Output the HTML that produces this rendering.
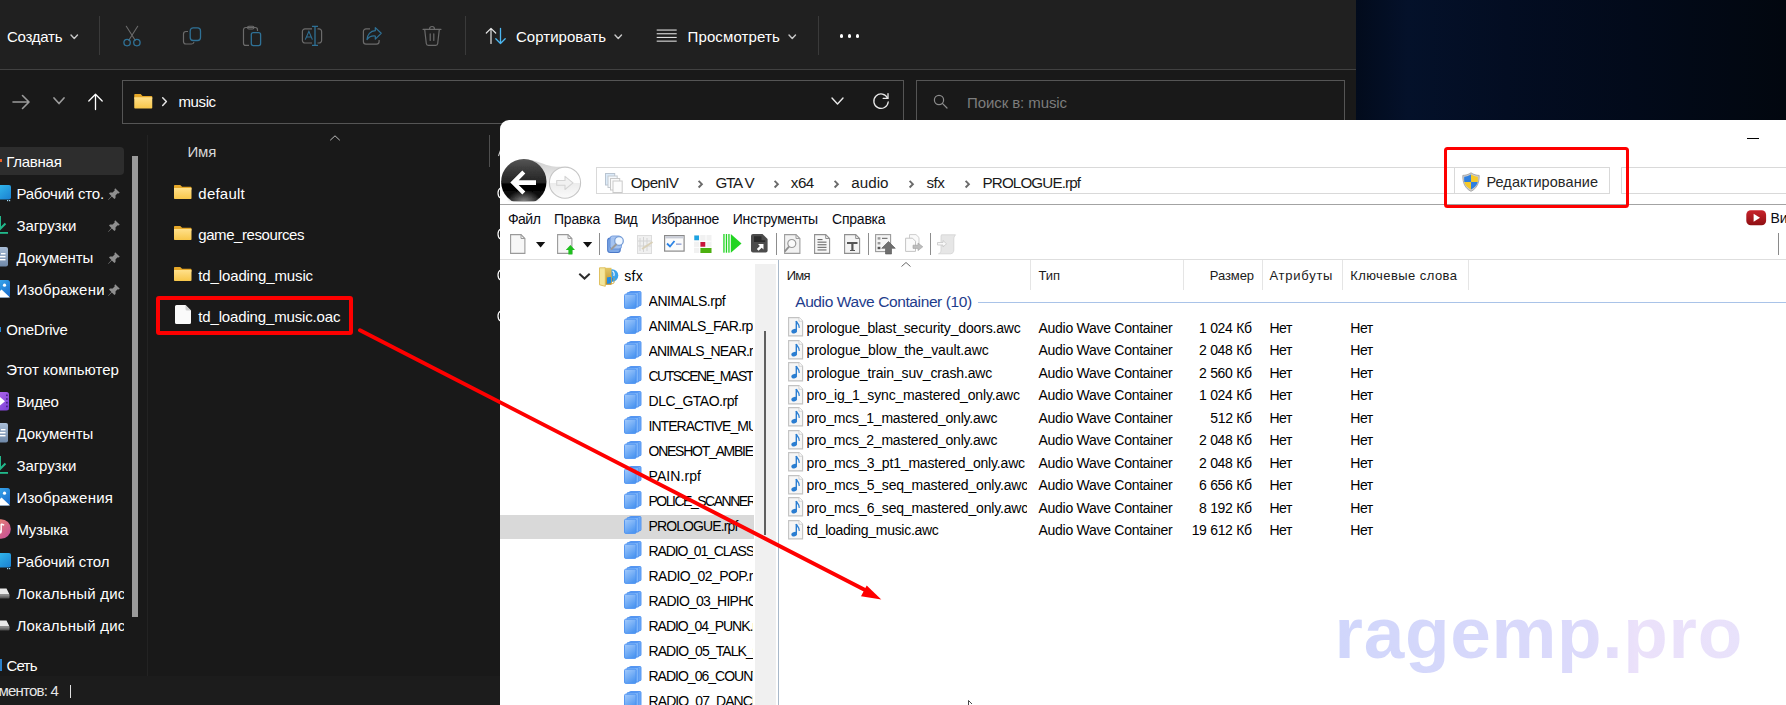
<!DOCTYPE html>
<html><head><meta charset="utf-8">
<style>
html,body{margin:0;padding:0;}
body{width:1786px;height:705px;overflow:hidden;position:relative;background:#030a1a;font-family:"Liberation Sans",sans-serif;}
.a{position:absolute;}
.t{position:absolute;white-space:nowrap;line-height:1;}
svg{overflow:visible;}
#desk{left:1356px;top:0;width:430px;height:120px;background:linear-gradient(90deg,#020b1c 0%,#04112a 12%,#030d22 35%,#020a1a 65%,#02070f 100%);}
#ex{left:0;top:0;width:1356px;height:705px;background:#191919;overflow:hidden;}
#extb{left:0;top:0;width:1356px;height:69px;background:#202020;border-bottom:1px solid #414141;}
#iv{left:500px;top:120px;width:1286px;height:585px;background:#fff;border-top-left-radius:9px;overflow:hidden;}
</style></head><body>

<div id="desk" class="a"></div>
<div id="ex" class="a">
<div id="extb" class="a"></div>
<!-- toolbar -->
<div class="t" style="left:7.00px;top:28.60px;font-size:15px;color:#fff;letter-spacing:-0.244px;">Создать</div>
<svg class="a" style="left:70px;top:33.5px;" width="8.5" height="5.5" viewBox="0 0 8.5 5.5"><path d="M1 1 L4.25 4.5 L7.5 1" fill="none" stroke="#c8c8c8" stroke-width="1.4" stroke-linecap="round" stroke-linejoin="round"/></svg>
<div class="a" style="left:99px;top:16px;width:1px;height:39px;background:#3a3a3a"></div>
<svg class="a" style="left:120px;top:24px;" width="24" height="24" viewBox="0 0 24 24"><path d="M6.3 2.3 L15.2 16.3 M17.7 2.3 L8.8 16.3" stroke="#6b6b6b" stroke-width="1.1" fill="none" stroke-linecap="round"/><circle cx="7.1" cy="18.6" r="3.2" fill="none" stroke="#2f7196" stroke-width="1.3"/><circle cx="16.9" cy="18.6" r="3.2" fill="none" stroke="#2f7196" stroke-width="1.3"/></svg>
<svg class="a" style="left:180px;top:24px;" width="24" height="24" viewBox="0 0 24 24"><path d="M8 7.5 H6 A2.5 2.5 0 0 0 3.5 10 V17.5 A2.5 2.5 0 0 0 6 20 H11.5 A2.5 2.5 0 0 0 14 18" fill="none" stroke="#6b6b6b" stroke-width="1.2"/><rect x="10.2" y="3.9" width="10.3" height="12.6" rx="3" fill="none" stroke="#2f7196" stroke-width="1.3"/></svg>
<svg class="a" style="left:240px;top:24px;" width="24" height="24" viewBox="0 0 24 24"><path d="M9 21.4 H5.7 A2.2 2.2 0 0 1 3.5 19.2 V5.7 A2.2 2.2 0 0 1 5.7 3.5 H15.3 A2.2 2.2 0 0 1 17.5 5.7 V7" fill="none" stroke="#6b6b6b" stroke-width="1.2"/><rect x="7.5" y="2.2" width="6.5" height="2.8" rx="1.4" fill="none" stroke="#6b6b6b" stroke-width="1.1"/><rect x="11.3" y="8.6" width="9.3" height="13" rx="2" fill="none" stroke="#2f7196" stroke-width="1.3"/></svg>
<svg class="a" style="left:299px;top:24px;" width="26" height="24" viewBox="0 0 26 24"><path d="M13 4.9 H6 A2.6 2.6 0 0 0 3.4 7.5 V16.4 A2.6 2.6 0 0 0 6 19 H13 M18.5 4.9 H20 A2.6 2.6 0 0 1 22.6 7.5 V16.4 A2.6 2.6 0 0 1 20 19 H18.5" fill="none" stroke="#6b6b6b" stroke-width="1.2"/><path d="M16 2.3 V21.4 M13 2.3 H19 M13 21.4 H19" stroke="#2f7196" stroke-width="1.3" fill="none"/><path d="M6.3 15.6 L9.9 7.3 L13.4 15.6 M7.5 13 H12.3" stroke="#2f7196" stroke-width="1.1" fill="none"/></svg>
<svg class="a" style="left:360px;top:24px;" width="24" height="24" viewBox="0 0 24 24"><path d="M10 4.8 H6 A2.6 2.6 0 0 0 3.4 7.4 V17.5 A2.6 2.6 0 0 0 6 20.1 H16.5 A2.6 2.6 0 0 0 19.1 17.5 V16" fill="none" stroke="#6b6b6b" stroke-width="1.2"/><path d="M15.3 3.6 L21.2 9.3 L15.3 15.2 V12 C11.5 11.6 8.8 13 7 15.6 C7.2 10.6 10.5 7 15.3 6.7 Z" fill="none" stroke="#2f7196" stroke-width="1.2" stroke-linejoin="round"/></svg>
<svg class="a" style="left:420px;top:24px;" width="24" height="24" viewBox="0 0 24 24"><path d="M3 5.3 H21 M9.5 5 A2.5 2.5 0 0 1 14.5 5 M4.7 5.5 L6.3 19.5 A2 2 0 0 0 8.3 21.3 H15.7 A2 2 0 0 0 17.7 19.5 L19.3 5.5 M10.2 9.8 V16.5 M13.8 9.8 V16.5" fill="none" stroke="#6b6b6b" stroke-width="1.2" stroke-linecap="round"/></svg>
<div class="a" style="left:465px;top:16px;width:1px;height:39px;background:#3a3a3a"></div>
<svg class="a" style="left:484px;top:26px;" width="26" height="20" viewBox="0 0 26 20"><path d="M7 17.5 V2.3 M2.3 7 L7 2.3 L11.7 7" fill="none" stroke="#e4e4e4" stroke-width="1.2" stroke-linecap="round" stroke-linejoin="round"/><path d="M16.5 2.3 V17.5 M11.8 12.8 L16.5 17.5 L21.2 12.8" fill="none" stroke="#4cb6f0" stroke-width="1.3" stroke-linecap="round" stroke-linejoin="round"/></svg>
<div class="t" style="left:516.00px;top:28.60px;font-size:15px;color:#fff;letter-spacing:0.035px;">Сортировать</div>
<svg class="a" style="left:614px;top:33.5px;" width="8.5" height="5.5" viewBox="0 0 8.5 5.5"><path d="M1 1 L4.25 4.5 L7.5 1" fill="none" stroke="#c8c8c8" stroke-width="1.4" stroke-linecap="round" stroke-linejoin="round"/></svg>
<svg class="a" style="left:656px;top:28px;" width="22" height="16" viewBox="0 0 22 16"><rect x="0.7" y="1.5" width="20" height="1.1" fill="#dcdcdc"/><rect x="0.7" y="5.2" width="20" height="1.1" fill="#dcdcdc"/><rect x="0.7" y="8.9" width="20" height="1.1" fill="#dcdcdc"/><rect x="0.7" y="12.6" width="20" height="1.1" fill="#dcdcdc"/></svg>
<div class="t" style="left:687.50px;top:28.60px;font-size:15px;color:#fff;letter-spacing:0.133px;">Просмотреть</div>
<svg class="a" style="left:788px;top:33.5px;" width="8.5" height="5.5" viewBox="0 0 8.5 5.5"><path d="M1 1 L4.25 4.5 L7.5 1" fill="none" stroke="#c8c8c8" stroke-width="1.4" stroke-linecap="round" stroke-linejoin="round"/></svg>
<div class="a" style="left:818px;top:16px;width:1px;height:39px;background:#3a3a3a"></div>
<div class="a" style="left:839.9px;top:34.4px;width:3.2px;height:3.2px;background:#fff;border-radius:50%"></div>
<div class="a" style="left:847.9px;top:34.4px;width:3.2px;height:3.2px;background:#fff;border-radius:50%"></div>
<div class="a" style="left:855.9px;top:34.4px;width:3.2px;height:3.2px;background:#fff;border-radius:50%"></div>
<!-- navbar -->
<svg class="a" style="left:10px;top:90px;" width="24" height="24" viewBox="0 0 24 24"><path d="M3 12 H18.5 M12.5 5.5 L19 12 L12.5 18.5" fill="none" stroke="#9b9b9b" stroke-width="1.6" stroke-linecap="round" stroke-linejoin="round"/></svg>
<svg class="a" style="left:53px;top:97px;" width="12" height="7.5" viewBox="0 0 12 7.5"><path d="M1 1 L6 6.5 L11 1" fill="none" stroke="#9b9b9b" stroke-width="1.7" stroke-linecap="round" stroke-linejoin="round"/></svg>
<svg class="a" style="left:84px;top:90px;" width="24" height="24" viewBox="0 0 24 24"><path d="M11.5 19.5 V4.5 M4.8 11 L11.5 4.3 L18.2 11" fill="none" stroke="#fff" stroke-width="1.3" stroke-linecap="round" stroke-linejoin="round"/></svg>
<div class="a" style="left:122px;top:80px;width:780px;height:42px;border:1px solid #555;background:#191919"></div>
<svg class="a" style="left:134px;top:93.5px;" width="18.5" height="14.5" viewBox="0 0 18 14.5"><defs><linearGradient id="fg1433" x1="0" y1="0" x2="0" y2="1"><stop offset="0" stop-color="#ffe08a"/><stop offset="1" stop-color="#f7c649"/></linearGradient></defs><path d="M0.8 0 H6.4 L8.3 1.9 H17.2 A0.8 0.8 0 0 1 18 2.7 V5 H0 V0.8 A0.8 0.8 0 0 1 0.8 0 Z" fill="#e5a728"/><path d="M0 3.2 H18 V13.7 A0.8 0.8 0 0 1 17.2 14.5 H0.8 A0.8 0.8 0 0 1 0 13.7 Z" fill="url(#fg1433)"/></svg>
<svg class="a" style="left:160px;top:95px;" width="10" height="14" viewBox="0 0 10 14"><path d="M2.7 2.8 L6.4 6.6 L2.7 10.4" fill="none" stroke="#e6e6e6" stroke-width="1.5" stroke-linecap="round" stroke-linejoin="round"/></svg>
<div class="t" style="left:178.50px;top:93.80px;font-size:15px;color:#fff;letter-spacing:-0.394px;">music</div>
<svg class="a" style="left:831px;top:97px;" width="13" height="8" viewBox="0 0 13 8"><path d="M1 1 L6.5 7 L12 1" fill="none" stroke="#e8e8e8" stroke-width="1.4" stroke-linecap="round" stroke-linejoin="round"/></svg>
<svg class="a" style="left:871px;top:91px;" width="20" height="20" viewBox="0 0 20 20"><path d="M16.6 7.2 A7.2 7.2 0 1 0 17.2 11" fill="none" stroke="#e8e8e8" stroke-width="1.3" stroke-linecap="round"/><path d="M17 2.6 V7.4 H12.2" fill="none" stroke="#e8e8e8" stroke-width="1.3" stroke-linecap="round" stroke-linejoin="round"/></svg>
<div class="a" style="left:916px;top:80px;width:427px;height:42px;border:1px solid #555;background:#191919"></div>
<svg class="a" style="left:932px;top:93px;" width="18" height="18" viewBox="0 0 18 18"><circle cx="7" cy="7" r="4.6" fill="none" stroke="#8c8c8c" stroke-width="1.2"/><path d="M10.4 10.4 L15 15" stroke="#8c8c8c" stroke-width="1.2" stroke-linecap="round"/></svg>
<div class="t" style="left:967.00px;top:94.80px;font-size:15px;color:#7d7d7d;letter-spacing:-0.086px;">Поиск в: music</div>
<!-- sidebar -->
<div class="a" style="left:0px;top:147px;width:124px;height:27.5px;background:#2d2d2d;border-radius:0 4px 4px 0"></div>
<div class="a" style="left:0px;top:159px;width:1.5px;height:3px;background:#e8632a"></div>
<div class="a" style="left:132px;top:156px;width:6px;height:461px;background:#9a9a9a"></div>
<div class="a" style="left:146.5px;top:135px;width:1.5px;height:542px;background:#232323"></div>
<div class="t" style="left:6.30px;top:153.80px;font-size:15px;color:#fff;letter-spacing:-0.270px;">Главная</div>
<svg class="a" style="left:-7px;top:185px;" width="18" height="17" viewBox="0 0 18 17"><defs><linearGradient id="gd193" x1="0" y1="0" x2="1" y2="1"><stop offset="0" stop-color="#35c1f1"/><stop offset="1" stop-color="#1a7fd0"/></linearGradient></defs><rect x="0" y="0" width="18" height="14.5" rx="2" fill="url(#gd193)"/><rect x="14" y="15" width="1.2" height="1.2" fill="#9fd8f5"/><rect x="16" y="15" width="1.2" height="1.2" fill="#9fd8f5"/></svg>
<div class="a" style="left:16.4px;top:183.903px;width:88px;height:21px;overflow:hidden"><div class="t" style="left:0;top:2px;font-size:15px;color:#fff;letter-spacing:-0.196px">Рабочий сто...</div></div>
<svg class="a" style="left:107px;top:186.5px;" width="14" height="14" viewBox="0 0 14 14"><path d="M8.2 1.2 L12.8 5.8 L11.6 6.6 L10.7 6.2 L8.6 8.3 L8.5 11 L7.4 12 L4.8 9.4 L1.3 12.9 L1.1 12.7 L4.4 9 L2 6.6 L3 5.5 L5.7 5.4 L7.8 3.3 L7.4 2.4 Z" fill="#8f8f8f"/></svg>
<svg class="a" style="left:-8px;top:215px;" width="18" height="20" viewBox="0 0 18 20"><path d="M8 1 V13.5 M2.5 8.5 L8 14 L13.5 8.5" fill="none" stroke="#21b88b" stroke-width="2" stroke-linecap="butt" stroke-linejoin="miter"/><rect x="0" y="17" width="16" height="1.8" fill="#21b88b"/></svg>
<div class="t" style="left:16.40px;top:217.90px;font-size:15px;color:#fff;letter-spacing:-0.071px;">Загрузки</div>
<svg class="a" style="left:107px;top:218.5px;" width="14" height="14" viewBox="0 0 14 14"><path d="M8.2 1.2 L12.8 5.8 L11.6 6.6 L10.7 6.2 L8.6 8.3 L8.5 11 L7.4 12 L4.8 9.4 L1.3 12.9 L1.1 12.7 L4.4 9 L2 6.6 L3 5.5 L5.7 5.4 L7.8 3.3 L7.4 2.4 Z" fill="#8f8f8f"/></svg>
<svg class="a" style="left:-8px;top:247px;" width="17" height="20" viewBox="0 0 17 20"><defs><linearGradient id="gdoc257" x1="0" y1="0" x2="0" y2="1"><stop offset="0" stop-color="#a9bdd6"/><stop offset="1" stop-color="#6f88a8"/></linearGradient></defs><rect x="0" y="0" width="16" height="19.5" rx="2" fill="url(#gdoc257)"/><rect x="3" y="6" width="5" height="1.4" fill="#fff"/><rect x="9" y="6" width="4.5" height="1.4" fill="#fff"/><rect x="3" y="9" width="10.5" height="1.4" fill="#fff"/><rect x="3" y="12" width="10.5" height="1.4" fill="#fff"/></svg>
<div class="t" style="left:16.40px;top:249.90px;font-size:15px;color:#fff;letter-spacing:-0.047px;">Документы</div>
<svg class="a" style="left:107px;top:250.5px;" width="14" height="14" viewBox="0 0 14 14"><path d="M8.2 1.2 L12.8 5.8 L11.6 6.6 L10.7 6.2 L8.6 8.3 L8.5 11 L7.4 12 L4.8 9.4 L1.3 12.9 L1.1 12.7 L4.4 9 L2 6.6 L3 5.5 L5.7 5.4 L7.8 3.3 L7.4 2.4 Z" fill="#8f8f8f"/></svg>
<svg class="a" style="left:-8px;top:280px;" width="18" height="18" viewBox="0 0 18 18"><defs><linearGradient id="gim289" x1="0" y1="0" x2="1" y2="1"><stop offset="0" stop-color="#3fb4f3"/><stop offset="1" stop-color="#1767c9"/></linearGradient></defs><rect x="0" y="0" width="18" height="17.5" rx="2.5" fill="url(#gim289)"/><path d="M2 17.5 L9.5 9.5 L18 17.5 Z" fill="#fff"/><circle cx="12.5" cy="5.2" r="1.6" fill="#fff"/></svg>
<div class="a" style="left:16.4px;top:279.903px;width:88px;height:21px;overflow:hidden"><div class="t" style="left:0;top:2px;font-size:15px;color:#fff;letter-spacing:0.221px">Изображения</div></div>
<svg class="a" style="left:107px;top:282.5px;" width="14" height="14" viewBox="0 0 14 14"><path d="M8.2 1.2 L12.8 5.8 L11.6 6.6 L10.7 6.2 L8.6 8.3 L8.5 11 L7.4 12 L4.8 9.4 L1.3 12.9 L1.1 12.7 L4.4 9 L2 6.6 L3 5.5 L5.7 5.4 L7.8 3.3 L7.4 2.4 Z" fill="#8f8f8f"/></svg>
<div class="a" style="left:0px;top:327px;width:1.2px;height:5px;background:#2a8ad4"></div>
<div class="t" style="left:6.30px;top:321.80px;font-size:15px;color:#fff;letter-spacing:-0.269px;">OneDrive</div>
<div class="t" style="left:6.30px;top:361.90px;font-size:15px;color:#fff;letter-spacing:0.038px;">Этот компьютер</div>
<svg class="a" style="left:-8px;top:392px;" width="17" height="19" viewBox="0 0 17 19"><defs><linearGradient id="gv401" x1="0" y1="0" x2="1" y2="1"><stop offset="0" stop-color="#b86cf0"/><stop offset="1" stop-color="#7a3fd6"/></linearGradient></defs><rect x="0" y="0" width="17" height="18.5" rx="2.5" fill="url(#gv401)"/><path d="M8 5 L13 9.2 L8 13.5 Z" fill="#fff"/><rect x="14.2" y="2.5" width="1.4" height="1.6" fill="#3a1a78"/><rect x="14.2" y="6.2" width="1.4" height="1.6" fill="#3a1a78"/><rect x="14.2" y="9.9" width="1.4" height="1.6" fill="#3a1a78"/><rect x="14.2" y="13.6" width="1.4" height="1.6" fill="#3a1a78"/></svg>
<div class="t" style="left:16.40px;top:393.80px;font-size:15px;color:#fff;letter-spacing:-0.324px;">Видео</div>
<svg class="a" style="left:-8px;top:423px;" width="17" height="20" viewBox="0 0 17 20"><defs><linearGradient id="gdoc433" x1="0" y1="0" x2="0" y2="1"><stop offset="0" stop-color="#a9bdd6"/><stop offset="1" stop-color="#6f88a8"/></linearGradient></defs><rect x="0" y="0" width="16" height="19.5" rx="2" fill="url(#gdoc433)"/><rect x="3" y="6" width="5" height="1.4" fill="#fff"/><rect x="9" y="6" width="4.5" height="1.4" fill="#fff"/><rect x="3" y="9" width="10.5" height="1.4" fill="#fff"/><rect x="3" y="12" width="10.5" height="1.4" fill="#fff"/></svg>
<div class="t" style="left:16.40px;top:425.80px;font-size:15px;color:#fff;letter-spacing:-0.047px;">Документы</div>
<svg class="a" style="left:-8px;top:455px;" width="18" height="20" viewBox="0 0 18 20"><path d="M8 1 V13.5 M2.5 8.5 L8 14 L13.5 8.5" fill="none" stroke="#21b88b" stroke-width="2" stroke-linecap="butt" stroke-linejoin="miter"/><rect x="0" y="17" width="16" height="1.8" fill="#21b88b"/></svg>
<div class="t" style="left:16.40px;top:457.80px;font-size:15px;color:#fff;letter-spacing:-0.071px;">Загрузки</div>
<svg class="a" style="left:-8px;top:488px;" width="18" height="18" viewBox="0 0 18 18"><defs><linearGradient id="gim497" x1="0" y1="0" x2="1" y2="1"><stop offset="0" stop-color="#3fb4f3"/><stop offset="1" stop-color="#1767c9"/></linearGradient></defs><rect x="0" y="0" width="18" height="17.5" rx="2.5" fill="url(#gim497)"/><path d="M2 17.5 L9.5 9.5 L18 17.5 Z" fill="#fff"/><circle cx="12.5" cy="5.2" r="1.6" fill="#fff"/></svg>
<div class="t" style="left:16.40px;top:490.10px;font-size:15px;color:#fff;letter-spacing:0.221px;">Изображения</div>
<svg class="a" style="left:-9px;top:519px;" width="20" height="20" viewBox="0 0 20 20"><defs><linearGradient id="gm529" x1="0" y1="0" x2="1" y2="1"><stop offset="0" stop-color="#f08a6a"/><stop offset="1" stop-color="#c24d9c"/></linearGradient></defs><circle cx="10" cy="10" r="9.8" fill="url(#gm529)"/><path d="M10.2 5 V12.8 M10.2 5 L13.2 6.2" stroke="#fff" stroke-width="1.4" fill="none"/><circle cx="9" cy="13" r="1.8" fill="#fff"/></svg>
<div class="t" style="left:16.40px;top:522.10px;font-size:15px;color:#fff;letter-spacing:-0.243px;">Музыка</div>
<svg class="a" style="left:-7px;top:553px;" width="18" height="17" viewBox="0 0 18 17"><defs><linearGradient id="gd561" x1="0" y1="0" x2="1" y2="1"><stop offset="0" stop-color="#35c1f1"/><stop offset="1" stop-color="#1a7fd0"/></linearGradient></defs><rect x="0" y="0" width="18" height="14.5" rx="2" fill="url(#gd561)"/><rect x="14" y="15" width="1.2" height="1.2" fill="#9fd8f5"/><rect x="16" y="15" width="1.2" height="1.2" fill="#9fd8f5"/></svg>
<div class="t" style="left:16.40px;top:554.10px;font-size:15px;color:#fff;letter-spacing:-0.097px;">Рабочий стол</div>
<svg class="a" style="left:-8px;top:588px;" width="18" height="12" viewBox="0 0 18 12"><defs><linearGradient id="dk594" x1="0" y1="0" x2="0" y2="1"><stop offset="0" stop-color="#9a9a9a"/><stop offset="1" stop-color="#4a4a4a"/></linearGradient></defs><path d="M3 0.5 H14.5 L17.5 6.5 H0 Z" fill="#e9e9e9"/><rect x="0" y="6.5" width="17.5" height="4" rx="0.8" fill="url(#dk594)"/></svg>
<div class="a" style="left:16.4px;top:584.003px;width:107.3px;height:21px;overflow:hidden"><div class="t" style="left:0;top:2px;font-size:15px;color:#fff;letter-spacing:0.229px">Локальный диск</div></div>
<svg class="a" style="left:-8px;top:620px;" width="18" height="12" viewBox="0 0 18 12"><defs><linearGradient id="dk626" x1="0" y1="0" x2="0" y2="1"><stop offset="0" stop-color="#9a9a9a"/><stop offset="1" stop-color="#4a4a4a"/></linearGradient></defs><path d="M3 0.5 H14.5 L17.5 6.5 H0 Z" fill="#e9e9e9"/><rect x="0" y="6.5" width="17.5" height="4" rx="0.8" fill="url(#dk626)"/></svg>
<div class="a" style="left:16.4px;top:616.003px;width:107.3px;height:21px;overflow:hidden"><div class="t" style="left:0;top:2px;font-size:15px;color:#fff;letter-spacing:0.229px">Локальный диск</div></div>
<div class="a" style="left:0px;top:659px;width:1.5px;height:12px;background:#2a7fc9"></div>
<div class="t" style="left:6.40px;top:657.80px;font-size:15px;color:#fff;letter-spacing:-0.766px;">Сеть</div>
<div class="a" style="left:0px;top:676px;width:500px;height:29px;background:#1c1c1c"></div>
<div class="t" style="left:-1.50px;top:682.80px;font-size:15px;color:#e6e6e6;letter-spacing:-0.792px;">ментов: 4</div>
<div class="a" style="left:70px;top:685px;width:1px;height:12.5px;background:#e0e0e0"></div>
<!-- filelist -->
<div class="t" style="left:187.40px;top:143.80px;font-size:15px;color:#d6d6d6;letter-spacing:-0.072px;">Имя</div>
<svg class="a" style="left:329px;top:134px;" width="12" height="8" viewBox="0 0 12 8"><path d="M1.5 6 L6 1.8 L10.5 6" fill="none" stroke="#bdbdbd" stroke-width="1" stroke-linecap="round" stroke-linejoin="round"/></svg>
<div class="a" style="left:489px;top:134.5px;width:1px;height:32.5px;background:#4f4f4f"></div>
<svg class="a" style="left:497.5px;top:145px;" width="3" height="12" viewBox="0 0 3 12"><path d="M0.5 11 L3 4" stroke="#cfcfcf" stroke-width="1.1"/></svg>
<svg class="a" style="left:174px;top:185.2px;" width="17.5" height="14.1" viewBox="0 0 18 14.5"><defs><linearGradient id="fg1925" x1="0" y1="0" x2="0" y2="1"><stop offset="0" stop-color="#ffe08a"/><stop offset="1" stop-color="#f7c649"/></linearGradient></defs><path d="M0.8 0 H6.4 L8.3 1.9 H17.2 A0.8 0.8 0 0 1 18 2.7 V5 H0 V0.8 A0.8 0.8 0 0 1 0.8 0 Z" fill="#e5a728"/><path d="M0 3.2 H18 V13.7 A0.8 0.8 0 0 1 17.2 14.5 H0.8 A0.8 0.8 0 0 1 0 13.7 Z" fill="url(#fg1925)"/></svg>
<div class="t" style="left:198.30px;top:185.90px;font-size:15px;color:#fff;letter-spacing:0.238px;">default</div>
<svg class="a" style="left:174px;top:226.2px;" width="17.5" height="14.1" viewBox="0 0 18 14.5"><defs><linearGradient id="fg1966" x1="0" y1="0" x2="0" y2="1"><stop offset="0" stop-color="#ffe08a"/><stop offset="1" stop-color="#f7c649"/></linearGradient></defs><path d="M0.8 0 H6.4 L8.3 1.9 H17.2 A0.8 0.8 0 0 1 18 2.7 V5 H0 V0.8 A0.8 0.8 0 0 1 0.8 0 Z" fill="#e5a728"/><path d="M0 3.2 H18 V13.7 A0.8 0.8 0 0 1 17.2 14.5 H0.8 A0.8 0.8 0 0 1 0 13.7 Z" fill="url(#fg1966)"/></svg>
<div class="t" style="left:198.30px;top:226.90px;font-size:15px;color:#fff;letter-spacing:-0.430px;">game_resources</div>
<svg class="a" style="left:174px;top:267.2px;" width="17.5" height="14.1" viewBox="0 0 18 14.5"><defs><linearGradient id="fg2007" x1="0" y1="0" x2="0" y2="1"><stop offset="0" stop-color="#ffe08a"/><stop offset="1" stop-color="#f7c649"/></linearGradient></defs><path d="M0.8 0 H6.4 L8.3 1.9 H17.2 A0.8 0.8 0 0 1 18 2.7 V5 H0 V0.8 A0.8 0.8 0 0 1 0.8 0 Z" fill="#e5a728"/><path d="M0 3.2 H18 V13.7 A0.8 0.8 0 0 1 17.2 14.5 H0.8 A0.8 0.8 0 0 1 0 13.7 Z" fill="url(#fg2007)"/></svg>
<div class="t" style="left:198.30px;top:267.90px;font-size:15px;color:#fff;letter-spacing:-0.128px;">td_loading_music</div>
<svg class="a" style="left:175px;top:305px;" width="16" height="19" viewBox="0 0 16 19"><path d="M1.5 0 H10.5 L16 5.5 V17.5 A1.5 1.5 0 0 1 14.5 19 H1.5 A1.5 1.5 0 0 1 0 17.5 V1.5 A1.5 1.5 0 0 1 1.5 0 Z" fill="#fafafa"/><path d="M10.5 0 V4 A1.5 1.5 0 0 0 12 5.5 H16 Z" fill="#cfcfcf"/></svg>
<div class="t" style="left:198.30px;top:308.90px;font-size:15px;color:#fff;letter-spacing:-0.155px;">td_loading_music.oac</div>
<svg class="a" style="left:496.5px;top:187px;" width="4" height="12" viewBox="0 0 4 12"><path d="M3.5 1 C1.6 2 1 4 1 6 C1 8 1.6 10 3.5 11" fill="none" stroke="#fff" stroke-width="1.2"/></svg>
<svg class="a" style="left:496.5px;top:228px;" width="4" height="12" viewBox="0 0 4 12"><path d="M3.5 1 C1.6 2 1 4 1 6 C1 8 1.6 10 3.5 11" fill="none" stroke="#fff" stroke-width="1.2"/></svg>
<svg class="a" style="left:496.5px;top:269px;" width="4" height="12" viewBox="0 0 4 12"><path d="M3.5 1 C1.6 2 1 4 1 6 C1 8 1.6 10 3.5 11" fill="none" stroke="#fff" stroke-width="1.2"/></svg>
<svg class="a" style="left:496.5px;top:310px;" width="4" height="12" viewBox="0 0 4 12"><path d="M3.5 1 C1.6 2 1 4 1 6 C1 8 1.6 10 3.5 11" fill="none" stroke="#fff" stroke-width="1.2"/></svg>
</div>
<div id="iv" class="a">
<!-- ivtop -->
<div class="a" style="left:1247px;top:18px;width:12px;height:1px;background:#000"></div>
<svg class="a" style="left:20px;top:36px;" width="50" height="36" viewBox="0 0 50 36"><defs><linearGradient id="tl" x1="0" y1="0" x2="0" y2="1"><stop offset="0" stop-color="#cdcdcd"/><stop offset="0.55" stop-color="#e6e6e6"/><stop offset="1" stop-color="#ffffff"/></linearGradient></defs><path d="M4 3.2 C16 3.5 24 9 32 10.2 C38 11 42 10.8 46 11 L46 34 L4 34 Z" fill="url(#tl)"/></svg>
<svg class="a" style="left:48px;top:46px;" width="34" height="34" viewBox="0 0 34 34"><defs><linearGradient id="fw" x1="0" y1="0" x2="0" y2="1"><stop offset="0" stop-color="#ffffff"/><stop offset="0.5" stop-color="#fdfdfd"/><stop offset="0.52" stop-color="#ececec"/><stop offset="1" stop-color="#fbfbfb"/></linearGradient></defs><circle cx="17" cy="16.7" r="15.6" fill="url(#fw)" stroke="#c6c6c6" stroke-width="1.1"/><path d="M8.7 14.5 H17 V10.3 L25 16.9 L17 23.5 V19.3 H8.7 Z" fill="#f1f1f1" stroke="#d4d4d4" stroke-width="1.1" stroke-linejoin="round"/></svg>
<svg class="a" style="left:0px;top:38px;" width="48" height="46" viewBox="0 0 48 46"><defs><linearGradient id="bk" x1="0" y1="0" x2="0" y2="1"><stop offset="0" stop-color="#565656"/><stop offset="0.25" stop-color="#3a3a3a"/><stop offset="0.53" stop-color="#222"/><stop offset="0.54" stop-color="#000"/><stop offset="0.8" stop-color="#0a0a0a"/><stop offset="1" stop-color="#2a2a2a"/></linearGradient><radialGradient id="bkh" cx="0.5" cy="0.5" r="0.5"><stop offset="0" stop-color="#8a8a8a" stop-opacity="0.95"/><stop offset="1" stop-color="#8a8a8a" stop-opacity="0"/></radialGradient><clipPath id="bkc"><rect x="0" y="0" width="48" height="43.3"/></clipPath><filter id="bkb"><feGaussianBlur stdDeviation="0.5"/></filter></defs><g clip-path="url(#bkc)"><circle cx="23.8" cy="23.8" r="22.7" fill="url(#bk)" filter="url(#bkb)"/><ellipse cx="23.8" cy="43.3" rx="17" ry="11" fill="url(#bkh)"/></g><path d="M10.3 24.6 L22.3 12.6 L25.3 15.6 L18.7 22.3 H36 V26.9 H18.7 L25.3 33.6 L22.3 36.6 Z" fill="#fff"/></svg>
<div class="a" style="left:96px;top:47px;width:858.5px;height:26.5px;border:1px solid #d9d9d9;border-right:none;box-sizing:border-box;background:#fff"></div>
<svg class="a" style="left:105px;top:53px;" width="18" height="20" viewBox="0 0 18 20"><rect x="0.5" y="0.5" width="9.2" height="11.5" fill="#dbeaf9" stroke="#b9c4d0" stroke-width="1"/><rect x="3" y="3" width="9.2" height="11.5" fill="#f4f8fc" stroke="#c4c9cf" stroke-width="1"/><rect x="5.5" y="5.5" width="9.2" height="11.5" fill="#fafafa" stroke="#c8c8c8" stroke-width="1"/><rect x="8" y="8" width="9.2" height="11.5" fill="#fcfcfc" stroke="#cacaca" stroke-width="1"/></svg>
<div class="t" style="left:130.70px;top:55.33px;font-size:15.2px;color:#1a1a1a;letter-spacing:-0.641px;">OpenIV</div>
<svg class="a" style="left:196.5px;top:58.5px;" width="8" height="10" viewBox="0 0 8 10"><path d="M1.6 1.9 L4.9 5.2 L1.6 8.5" fill="none" stroke="#6a6a6a" stroke-width="1.9"/></svg>
<div class="t" style="left:215.40px;top:55.33px;font-size:15.2px;color:#1a1a1a;letter-spacing:-1.173px;">GTA</div>
<div class="t" style="left:244.60px;top:55.33px;font-size:15.2px;color:#1a1a1a;">V</div>
<svg class="a" style="left:272.5px;top:58.5px;" width="8" height="10" viewBox="0 0 8 10"><path d="M1.6 1.9 L4.9 5.2 L1.6 8.5" fill="none" stroke="#6a6a6a" stroke-width="1.9"/></svg>
<div class="t" style="left:290.80px;top:55.33px;font-size:15.2px;color:#1a1a1a;letter-spacing:-0.502px;">x64</div>
<svg class="a" style="left:332.5px;top:58.5px;" width="8" height="10" viewBox="0 0 8 10"><path d="M1.6 1.9 L4.9 5.2 L1.6 8.5" fill="none" stroke="#6a6a6a" stroke-width="1.9"/></svg>
<div class="t" style="left:351.30px;top:55.33px;font-size:15.2px;color:#1a1a1a;letter-spacing:0.002px;">audio</div>
<svg class="a" style="left:407.5px;top:58.5px;" width="8" height="10" viewBox="0 0 8 10"><path d="M1.6 1.9 L4.9 5.2 L1.6 8.5" fill="none" stroke="#6a6a6a" stroke-width="1.9"/></svg>
<div class="t" style="left:426.60px;top:55.33px;font-size:15.2px;color:#1a1a1a;letter-spacing:-0.641px;">sfx</div>
<svg class="a" style="left:463.5px;top:58.5px;" width="8" height="10" viewBox="0 0 8 10"><path d="M1.6 1.9 L4.9 5.2 L1.6 8.5" fill="none" stroke="#6a6a6a" stroke-width="1.9"/></svg>
<div class="t" style="left:482.50px;top:55.33px;font-size:15.2px;color:#1a1a1a;letter-spacing:-0.860px;">PROLOGUE.rpf</div>
<div class="a" style="left:954px;top:47px;width:156px;height:26.5px;border:1px solid #d9d9d9;box-sizing:border-box;background:#fff"></div>
<svg class="a" style="left:962px;top:51.5px;" width="18" height="20" viewBox="0 0 18 20"><path d="M9 0.8 C11.5 2.6 14.5 3.4 17.2 3.4 C17.4 10.5 15 16.5 9 19.3 C3 16.5 0.6 10.5 0.8 3.4 C3.5 3.4 6.5 2.6 9 0.8 Z" fill="#cfcfcf" stroke="#9a9a9a" stroke-width="0.8"/><path d="M9 2.6 V10 H2.3 C2.1 8.3 2.1 6.5 2.2 4.7 C4.5 4.6 7 3.9 9 2.6 Z" fill="#2f7fe0"/><path d="M9 2.6 C11 3.9 13.5 4.6 15.8 4.7 C15.9 6.5 15.9 8.3 15.7 10 H9 Z" fill="#f6c928"/><path d="M2.3 10 H9 V17.6 C5.3 15.8 3 13.3 2.3 10 Z" fill="#f6c928"/><path d="M9 10 H15.7 C15 13.3 12.7 15.8 9 17.6 Z" fill="#2f7fe0"/></svg>
<div class="t" style="left:986.40px;top:54.73px;font-size:14.5px;color:#262626;letter-spacing:0.089px;">Редактирование</div>
<div class="a" style="left:1121px;top:47px;width:170px;height:26.5px;border:1px solid #d9d9d9;box-sizing:border-box;background:#fff"></div>
<div class="a" style="left:0px;top:84px;width:1286px;height:1px;background:#a3a3a3"></div>
<div class="t" style="left:8.00px;top:92.15px;font-size:14px;color:#0b0b14;letter-spacing:-0.530px;">Файл</div>
<div class="t" style="left:54.00px;top:92.15px;font-size:14px;color:#0b0b14;letter-spacing:-0.215px;">Правка</div>
<div class="t" style="left:114.00px;top:92.15px;font-size:14px;color:#0b0b14;letter-spacing:-0.776px;">Вид</div>
<div class="t" style="left:151.40px;top:92.15px;font-size:14px;color:#0b0b14;letter-spacing:-0.394px;">Избранное</div>
<div class="t" style="left:232.70px;top:92.15px;font-size:14px;color:#0b0b14;letter-spacing:-0.181px;">Инструменты</div>
<div class="t" style="left:332.00px;top:92.15px;font-size:14px;color:#0b0b14;letter-spacing:-0.217px;">Справка</div>
<svg class="a" style="left:1246px;top:90px;" width="21" height="16" viewBox="0 0 21 16"><defs><linearGradient id="yt" x1="0" y1="0" x2="0" y2="1"><stop offset="0" stop-color="#c8232b"/><stop offset="1" stop-color="#8e0f12"/></linearGradient></defs><rect x="0.3" y="0.3" width="19.8" height="15" rx="4.5" fill="url(#yt)"/><path d="M7.6 3.8 L14 7.8 L7.6 11.8 Z" fill="#fff"/></svg>
<div class="t" style="left:1270.40px;top:91.15px;font-size:14px;color:#0b0b14;">Вид</div>
<div class="a" style="left:1278px;top:113px;width:1px;height:22px;background:#8a8a8a"></div>
<div class="a" style="left:0px;top:139px;width:1286px;height:1px;background:#dedede"></div>
<!-- ivtoolbar -->
<svg class="a" style="left:9.5px;top:114px;" width="16" height="20.5" viewBox="0 0 16 20.5"><path d="M0.6 0.6 H11 L14.9 4.5 V19.4 H0.6 Z" fill="#f7f7f7" stroke="#9a9a9a" stroke-width="1.1"/><path d="M11 0.6 V4.5 H14.9" fill="none" stroke="#9a9a9a" stroke-width="1"/></svg>
<svg class="a" style="left:36px;top:121.8px;" width="9.4" height="5.6" viewBox="0 0 9.4 5.6"><path d="M0 0 H9.2 L4.6 5.4 Z" fill="#111"/></svg>
<svg class="a" style="left:57px;top:114px;" width="18.5" height="20.5" viewBox="0 0 18.5 20.5"><path d="M0.6 0.6 H11 L14.9 4.5 V19.4 H0.6 Z" fill="#f7f7f7" stroke="#9a9a9a" stroke-width="1.1"/><path d="M11 0.6 V4.5 H14.9" fill="none" stroke="#9a9a9a" stroke-width="1"/><path d="M13.4 11 L18 16 H15.4 V20.4 H11.4 V16 H8.8 Z" fill="#1fbf1f"/></svg>
<svg class="a" style="left:83.4px;top:121.8px;" width="9.4" height="5.6" viewBox="0 0 9.4 5.6"><path d="M0 0 H9.2 L4.6 5.4 Z" fill="#111"/></svg>
<div class="a" style="left:99px;top:113px;width:1.3px;height:22px;background:#8d8d8d"></div>
<svg class="a" style="left:107px;top:115px;" width="18" height="19" viewBox="0 0 18 19"><rect x="0.7" y="3" width="12.5" height="14.5" rx="2.5" fill="#7fa9e6" stroke="#4a78c8" stroke-width="1.1"/><rect x="3" y="1" width="11.5" height="13" rx="2.5" fill="#a9c6f2" stroke="#5b8ad6" stroke-width="0.9" opacity="0.9"/><circle cx="12" cy="6" r="4.3" fill="#eef6ff" stroke="#7aa0d8" stroke-width="1.3"/><path d="M9 9.5 L4.5 14" stroke="#9a9a9a" stroke-width="2" stroke-linecap="round"/></svg>
<svg class="a" style="left:137px;top:115px;" width="17" height="19" viewBox="0 0 17 19"><rect x="0.5" y="0.5" width="14" height="18" fill="#f0f0f0" stroke="#dcdcdc"/><path d="M3 3 V16 M6.5 2 V17 M10 3 V16 M1 6 H14 M1 11 H14" stroke="#d4d4d4" stroke-width="1"/><path d="M5 14 L15.5 7" stroke="#d9d0b8" stroke-width="2"/></svg>
<svg class="a" style="left:163.5px;top:115px;" width="21" height="17" viewBox="0 0 21 17"><rect x="0.6" y="0.6" width="19.5" height="15.5" fill="#fbfbfb" stroke="#8a8a8a" stroke-width="1.2"/><rect x="1.2" y="1.2" width="18.3" height="2.2" fill="#c9ccd6"/><path d="M3 8.5 L6 11.5 L10.5 6" fill="none" stroke="#2b83e6" stroke-width="1.8"/><rect x="12" y="8.5" width="5.5" height="1.3" fill="#8c9bd0"/></svg>
<svg class="a" style="left:193.5px;top:115px;" width="18" height="18.5" viewBox="0 0 18 18.5"><rect x="0" y="0" width="17.5" height="18" fill="#f1f1f1"/><rect x="0.3" y="0.5" width="4.8" height="4.8" fill="#1da3e2"/><rect x="6.3" y="7" width="5.2" height="4.8" fill="#c8143c"/><rect x="6.3" y="13" width="11.2" height="5" fill="#4cb010"/><path d="M5.7 0 V18 M0 6.2 H17.5 M0 12.4 H17.5 M12 0 V12.4" stroke="#fff" stroke-width="0.9"/></svg>
<svg class="a" style="left:223px;top:114.3px;" width="19" height="19" viewBox="0 0 19 19"><rect x="0.3" y="0" width="1.3" height="18.7" fill="#22d422"/><rect x="2.8" y="0" width="1.3" height="18.7" fill="#22d422"/><rect x="5.3" y="0" width="1.3" height="18.7" fill="#22d422"/><path d="M7.8 0 L18.5 9.4 L7.8 18.7 Z" fill="#22d422"/></svg>
<svg class="a" style="left:251px;top:114.3px;" width="17" height="19" viewBox="0 0 17 19"><path d="M2 0 H11.5 L16.6 5 V16.5 A2 2 0 0 1 14.6 18.5 H2 A2 2 0 0 1 0 16.5 V2 A2 2 0 0 1 2 0 Z" fill="#4c4c4c"/><path d="M3 2.2 H10.5 V6.3 H14.2 V8 H3 Z" fill="#2b2b2b"/><path d="M7 10 H12.5 V15.5 L10.7 13.7 L7.5 16.8 L5.8 15.1 L8.9 11.9 Z" fill="#fff"/></svg>
<div class="a" style="left:276.2px;top:113px;width:1.3px;height:22px;background:#8d8d8d"></div>
<svg class="a" style="left:284px;top:114px;" width="17.5" height="20.5" viewBox="0 0 17.5 20.5"><path d="M0.6 0.6 H12 L15.9 4.5 V19.4 H0.6 Z" fill="#f2f2f2" stroke="#9d9d9d" stroke-width="1.1"/><path d="M12 0.6 V4.5 H15.9" fill="none" stroke="#9d9d9d" stroke-width="1"/><circle cx="7.8" cy="9.5" r="4" fill="#fafafa" stroke="#9a9a9a" stroke-width="1.2"/><path d="M5 12.6 L0.6 17.6" stroke="#8f8f8f" stroke-width="1.8"/></svg>
<svg class="a" style="left:313.7px;top:114px;" width="17" height="20.5" viewBox="0 0 17 20.5"><path d="M0.6 0.6 H11.7 L15.6 4.5 V19.4 H0.6 Z" fill="#f7f7f7" stroke="#8f8f8f" stroke-width="1.1"/><path d="M11.7 0.6 V4.5 H15.6" fill="none" stroke="#8f8f8f" stroke-width="1"/><rect x="3.5" y="5" width="5" height="1.1" fill="#6a6a6a"/><rect x="3.5" y="7.6" width="9" height="1.1" fill="#6a6a6a"/><rect x="3.5" y="10.2" width="9" height="1.1" fill="#6a6a6a"/><rect x="3.5" y="12.8" width="9" height="1.1" fill="#6a6a6a"/><rect x="3.5" y="15.4" width="9" height="1.1" fill="#6a6a6a"/></svg>
<svg class="a" style="left:343.7px;top:114px;" width="17" height="20.5" viewBox="0 0 17 20.5"><path d="M0.6 0.6 H11.7 L15.6 4.5 V19.4 H0.6 Z" fill="#f4f4f4" stroke="#8f8f8f" stroke-width="1.1"/><path d="M11.7 0.6 V4.5 H15.6" fill="none" stroke="#8f8f8f" stroke-width="1"/><path d="M3 8 H13.5 V10 H9.5 V16 H11 V17 H6 V16 H7.3 V10 H3 Z" fill="#555"/></svg>
<div class="a" style="left:367.5px;top:113px;width:1.3px;height:22px;background:#8d8d8d"></div>
<svg class="a" style="left:375px;top:114px;" width="20.5" height="20.5" viewBox="0 0 20.5 20.5"><rect x="0.6" y="0.6" width="15" height="17" fill="#f4f4f4" stroke="#9a9a9a" stroke-width="1.1"/><rect x="2.6" y="3.2" width="2.8" height="2.4" fill="#9a9a9a"/><rect x="7" y="3.8" width="5.5" height="1.1" fill="#6a6a6a"/><rect x="2.6" y="8" width="2.8" height="2.4" fill="#9a9a9a"/><rect x="2.6" y="12.8" width="2.8" height="2.4" fill="#555"/><path d="M13.5 7.5 L20.3 14.3 H16.5 V20 H10.5 V14.3 H6.7 Z" fill="#6e6e6e" stroke="#555" stroke-width="0.6"/></svg>
<svg class="a" style="left:405px;top:114px;" width="18.5" height="18.5" viewBox="0 0 18.5 18.5"><path d="M4.5 0.6 H11 L14 3.5 V12 H4.5 Z" fill="#fafafa" stroke="#cfcfcf"/><path d="M0.6 4.2 H7.5 L10.5 7.2 V17.4 H0.6 Z" fill="#fbfbfb" stroke="#c4c4c4"/><path d="M8 11.2 H13 V9 L17.8 12.8 L13 16.6 V14.4 H8 Z" fill="#bdbdbd" stroke="#9f9f9f" stroke-width="0.6"/></svg>
<div class="a" style="left:430px;top:113px;width:1.3px;height:22px;background:#8d8d8d"></div>
<svg class="a" style="left:437px;top:114px;" width="20" height="20.5" viewBox="0 0 20 20.5"><path d="M4.5 0.8 H18.5 C17 2.5 16.8 4 16.8 6 V16 C16.8 18 16 19.5 13.5 19.8 H1.5 C3.5 19 4 17.8 4 16 V4 C4 2.5 4 1.5 4.5 0.8 Z" fill="#e6e6e6" stroke="#d2d2d2" stroke-width="0.8"/><path d="M0.5 8.5 H6 V6.5 L9.5 9.8 L6 13 V11 H0.5 Z" fill="#f8f8f8" stroke="#c8c8c8" stroke-width="0.8"/></svg>
<!-- ivtree -->
<div class="a" style="left:0px;top:394.6px;width:253.5px;height:24.4px;background:#d9d9d9"></div>
<div class="a" style="left:255px;top:144px;width:21px;height:441px;background:#f0f0f0"></div>
<div class="a" style="left:264px;top:210.5px;width:2.2px;height:204.5px;background:#5f5f5f"></div>
<div class="a" style="left:277.5px;top:140px;width:1px;height:445px;background:#a9b9ca"></div>
<svg class="a" style="left:78px;top:152px;" width="13" height="9" viewBox="0 0 13 9"><path d="M1.3 1.8 L6.5 6.6 L11.7 1.8" fill="none" stroke="#2e2e2e" stroke-width="2"/></svg>
<svg class="a" style="left:98.5px;top:146.5px;" width="20" height="20" viewBox="0 0 20 20"><defs><linearGradient id="sfg" x1="0" y1="0" x2="0" y2="1"><stop offset="0" stop-color="#e3c765"/><stop offset="1" stop-color="#b98f2c"/></linearGradient></defs><circle cx="13" cy="8.5" r="6.3" fill="#3aa2ea"/><path d="M13.5 4 C15 5 15.5 7 14.8 9" stroke="#e8f4ff" stroke-width="1.2" fill="none"/><rect x="5" y="0.8" width="7.5" height="17" fill="url(#sfg)"/><path d="M8 10.5 C10 9.5 13 10 14.5 11.5 C14 15 11.5 17 8 16.8 Z" fill="#1f8be6"/><path d="M12.5 9 V17 L15 16 V11" fill="none" stroke="#cfa640" stroke-width="0.8"/><path d="M0.5 0.8 H6.3 V19.3 L0.5 17.8 Z" fill="#f3e69c" stroke="#dcbb55" stroke-width="0.9"/></svg>
<div class="t" style="left:124.30px;top:149.35px;font-size:14px;color:#000;letter-spacing:0.270px;">sfx</div>
<svg class="a" style="left:123.6px;top:170.8px;" width="18" height="18" viewBox="0 0 18 18"><defs><linearGradient id="cb300" x1="0" y1="0" x2="0.6" y2="1"><stop offset="0" stop-color="#a4cbfc"/><stop offset="1" stop-color="#4f97f1"/></linearGradient></defs><rect x="5.4" y="0.5" width="11.6" height="14.2" rx="1" fill="#74aef7" stroke="#4a8ff0" stroke-width="0.9"/><rect x="3" y="1.6" width="11.8" height="14.4" rx="1" fill="#7db4f8" stroke="#4a8ff0" stroke-width="0.9"/><rect x="0.5" y="3.2" width="11.6" height="14.2" rx="1.2" fill="url(#cb300)" stroke="#4a90f0" stroke-width="0.9"/></svg>
<div class="a" style="left:148.5px;top:171.449px;width:104.8px;height:22px;overflow:hidden"><div class="t" style="left:0;top:3px;font-size:14px;color:#000;letter-spacing:-0.444px">ANIMALS.rpf</div></div>
<svg class="a" style="left:123.6px;top:195.8px;" width="18" height="18" viewBox="0 0 18 18"><defs><linearGradient id="cb325" x1="0" y1="0" x2="0.6" y2="1"><stop offset="0" stop-color="#a4cbfc"/><stop offset="1" stop-color="#4f97f1"/></linearGradient></defs><rect x="5.4" y="0.5" width="11.6" height="14.2" rx="1" fill="#74aef7" stroke="#4a8ff0" stroke-width="0.9"/><rect x="3" y="1.6" width="11.8" height="14.4" rx="1" fill="#7db4f8" stroke="#4a8ff0" stroke-width="0.9"/><rect x="0.5" y="3.2" width="11.6" height="14.2" rx="1.2" fill="url(#cb325)" stroke="#4a90f0" stroke-width="0.9"/></svg>
<div class="a" style="left:148.5px;top:196.449px;width:104.8px;height:22px;overflow:hidden"><div class="t" style="left:0;top:3px;font-size:14px;color:#000;letter-spacing:-0.608px">ANIMALS_FAR.rpf</div></div>
<svg class="a" style="left:123.6px;top:220.8px;" width="18" height="18" viewBox="0 0 18 18"><defs><linearGradient id="cb350" x1="0" y1="0" x2="0.6" y2="1"><stop offset="0" stop-color="#a4cbfc"/><stop offset="1" stop-color="#4f97f1"/></linearGradient></defs><rect x="5.4" y="0.5" width="11.6" height="14.2" rx="1" fill="#74aef7" stroke="#4a8ff0" stroke-width="0.9"/><rect x="3" y="1.6" width="11.8" height="14.4" rx="1" fill="#7db4f8" stroke="#4a8ff0" stroke-width="0.9"/><rect x="0.5" y="3.2" width="11.6" height="14.2" rx="1.2" fill="url(#cb350)" stroke="#4a90f0" stroke-width="0.9"/></svg>
<div class="a" style="left:148.5px;top:221.449px;width:104.8px;height:22px;overflow:hidden"><div class="t" style="left:0;top:3px;font-size:14px;color:#000;letter-spacing:-0.893px">ANIMALS_NEAR.rpf</div></div>
<svg class="a" style="left:123.6px;top:245.8px;" width="18" height="18" viewBox="0 0 18 18"><defs><linearGradient id="cb375" x1="0" y1="0" x2="0.6" y2="1"><stop offset="0" stop-color="#a4cbfc"/><stop offset="1" stop-color="#4f97f1"/></linearGradient></defs><rect x="5.4" y="0.5" width="11.6" height="14.2" rx="1" fill="#74aef7" stroke="#4a8ff0" stroke-width="0.9"/><rect x="3" y="1.6" width="11.8" height="14.4" rx="1" fill="#7db4f8" stroke="#4a8ff0" stroke-width="0.9"/><rect x="0.5" y="3.2" width="11.6" height="14.2" rx="1.2" fill="url(#cb375)" stroke="#4a90f0" stroke-width="0.9"/></svg>
<div class="a" style="left:148.5px;top:246.449px;width:104.8px;height:22px;overflow:hidden"><div class="t" style="left:0;top:3px;font-size:14px;color:#000;letter-spacing:-1.491px">CUTSCENE_MASTERED_ONLY.rpf</div></div>
<svg class="a" style="left:123.6px;top:270.8px;" width="18" height="18" viewBox="0 0 18 18"><defs><linearGradient id="cb400" x1="0" y1="0" x2="0.6" y2="1"><stop offset="0" stop-color="#a4cbfc"/><stop offset="1" stop-color="#4f97f1"/></linearGradient></defs><rect x="5.4" y="0.5" width="11.6" height="14.2" rx="1" fill="#74aef7" stroke="#4a8ff0" stroke-width="0.9"/><rect x="3" y="1.6" width="11.8" height="14.4" rx="1" fill="#7db4f8" stroke="#4a8ff0" stroke-width="0.9"/><rect x="0.5" y="3.2" width="11.6" height="14.2" rx="1.2" fill="url(#cb400)" stroke="#4a90f0" stroke-width="0.9"/></svg>
<div class="a" style="left:148.5px;top:271.449px;width:104.8px;height:22px;overflow:hidden"><div class="t" style="left:0;top:3px;font-size:14px;color:#000;letter-spacing:-0.479px">DLC_GTAO.rpf</div></div>
<svg class="a" style="left:123.6px;top:295.8px;" width="18" height="18" viewBox="0 0 18 18"><defs><linearGradient id="cb425" x1="0" y1="0" x2="0.6" y2="1"><stop offset="0" stop-color="#a4cbfc"/><stop offset="1" stop-color="#4f97f1"/></linearGradient></defs><rect x="5.4" y="0.5" width="11.6" height="14.2" rx="1" fill="#74aef7" stroke="#4a8ff0" stroke-width="0.9"/><rect x="3" y="1.6" width="11.8" height="14.4" rx="1" fill="#7db4f8" stroke="#4a8ff0" stroke-width="0.9"/><rect x="0.5" y="3.2" width="11.6" height="14.2" rx="1.2" fill="url(#cb425)" stroke="#4a90f0" stroke-width="0.9"/></svg>
<div class="a" style="left:148.5px;top:296.449px;width:104.8px;height:22px;overflow:hidden"><div class="t" style="left:0;top:3px;font-size:14px;color:#000;letter-spacing:-0.970px">INTERACTIVE_MUSIC.rpf</div></div>
<svg class="a" style="left:123.6px;top:320.8px;" width="18" height="18" viewBox="0 0 18 18"><defs><linearGradient id="cb450" x1="0" y1="0" x2="0.6" y2="1"><stop offset="0" stop-color="#a4cbfc"/><stop offset="1" stop-color="#4f97f1"/></linearGradient></defs><rect x="5.4" y="0.5" width="11.6" height="14.2" rx="1" fill="#74aef7" stroke="#4a8ff0" stroke-width="0.9"/><rect x="3" y="1.6" width="11.8" height="14.4" rx="1" fill="#7db4f8" stroke="#4a8ff0" stroke-width="0.9"/><rect x="0.5" y="3.2" width="11.6" height="14.2" rx="1.2" fill="url(#cb450)" stroke="#4a90f0" stroke-width="0.9"/></svg>
<div class="a" style="left:148.5px;top:321.449px;width:104.8px;height:22px;overflow:hidden"><div class="t" style="left:0;top:3px;font-size:14px;color:#000;letter-spacing:-1.252px">ONESHOT_AMBIENCE.rpf</div></div>
<svg class="a" style="left:123.6px;top:345.8px;" width="18" height="18" viewBox="0 0 18 18"><defs><linearGradient id="cb475" x1="0" y1="0" x2="0.6" y2="1"><stop offset="0" stop-color="#a4cbfc"/><stop offset="1" stop-color="#4f97f1"/></linearGradient></defs><rect x="5.4" y="0.5" width="11.6" height="14.2" rx="1" fill="#74aef7" stroke="#4a8ff0" stroke-width="0.9"/><rect x="3" y="1.6" width="11.8" height="14.4" rx="1" fill="#7db4f8" stroke="#4a8ff0" stroke-width="0.9"/><rect x="0.5" y="3.2" width="11.6" height="14.2" rx="1.2" fill="url(#cb475)" stroke="#4a90f0" stroke-width="0.9"/></svg>
<div class="a" style="left:148.5px;top:346.449px;width:104.8px;height:22px;overflow:hidden"><div class="t" style="left:0;top:3px;font-size:14px;color:#000;letter-spacing:0.092px">PAIN.rpf</div></div>
<svg class="a" style="left:123.6px;top:370.8px;" width="18" height="18" viewBox="0 0 18 18"><defs><linearGradient id="cb500" x1="0" y1="0" x2="0.6" y2="1"><stop offset="0" stop-color="#a4cbfc"/><stop offset="1" stop-color="#4f97f1"/></linearGradient></defs><rect x="5.4" y="0.5" width="11.6" height="14.2" rx="1" fill="#74aef7" stroke="#4a8ff0" stroke-width="0.9"/><rect x="3" y="1.6" width="11.8" height="14.4" rx="1" fill="#7db4f8" stroke="#4a8ff0" stroke-width="0.9"/><rect x="0.5" y="3.2" width="11.6" height="14.2" rx="1.2" fill="url(#cb500)" stroke="#4a90f0" stroke-width="0.9"/></svg>
<div class="a" style="left:148.5px;top:371.449px;width:104.8px;height:22px;overflow:hidden"><div class="t" style="left:0;top:3px;font-size:14px;color:#000;letter-spacing:-1.483px">POLICE_SCANNER.rpf</div></div>
<svg class="a" style="left:123.6px;top:395.8px;" width="18" height="18" viewBox="0 0 18 18"><defs><linearGradient id="cb525" x1="0" y1="0" x2="0.6" y2="1"><stop offset="0" stop-color="#a4cbfc"/><stop offset="1" stop-color="#4f97f1"/></linearGradient></defs><rect x="5.4" y="0.5" width="11.6" height="14.2" rx="1" fill="#74aef7" stroke="#4a8ff0" stroke-width="0.9"/><rect x="3" y="1.6" width="11.8" height="14.4" rx="1" fill="#7db4f8" stroke="#4a8ff0" stroke-width="0.9"/><rect x="0.5" y="3.2" width="11.6" height="14.2" rx="1.2" fill="url(#cb525)" stroke="#4a90f0" stroke-width="0.9"/></svg>
<div class="a" style="left:148.5px;top:396.449px;width:104.8px;height:22px;overflow:hidden"><div class="t" style="left:0;top:3px;font-size:14px;color:#000;letter-spacing:-0.881px">PROLOGUE.rpf</div></div>
<svg class="a" style="left:123.6px;top:420.8px;" width="18" height="18" viewBox="0 0 18 18"><defs><linearGradient id="cb550" x1="0" y1="0" x2="0.6" y2="1"><stop offset="0" stop-color="#a4cbfc"/><stop offset="1" stop-color="#4f97f1"/></linearGradient></defs><rect x="5.4" y="0.5" width="11.6" height="14.2" rx="1" fill="#74aef7" stroke="#4a8ff0" stroke-width="0.9"/><rect x="3" y="1.6" width="11.8" height="14.4" rx="1" fill="#7db4f8" stroke="#4a8ff0" stroke-width="0.9"/><rect x="0.5" y="3.2" width="11.6" height="14.2" rx="1.2" fill="url(#cb550)" stroke="#4a90f0" stroke-width="0.9"/></svg>
<div class="a" style="left:148.5px;top:421.449px;width:104.8px;height:22px;overflow:hidden"><div class="t" style="left:0;top:3px;font-size:14px;color:#000;letter-spacing:-1.135px">RADIO_01_CLASS_ROCK.rpf</div></div>
<svg class="a" style="left:123.6px;top:445.8px;" width="18" height="18" viewBox="0 0 18 18"><defs><linearGradient id="cb575" x1="0" y1="0" x2="0.6" y2="1"><stop offset="0" stop-color="#a4cbfc"/><stop offset="1" stop-color="#4f97f1"/></linearGradient></defs><rect x="5.4" y="0.5" width="11.6" height="14.2" rx="1" fill="#74aef7" stroke="#4a8ff0" stroke-width="0.9"/><rect x="3" y="1.6" width="11.8" height="14.4" rx="1" fill="#7db4f8" stroke="#4a8ff0" stroke-width="0.9"/><rect x="0.5" y="3.2" width="11.6" height="14.2" rx="1.2" fill="url(#cb575)" stroke="#4a90f0" stroke-width="0.9"/></svg>
<div class="a" style="left:148.5px;top:446.449px;width:104.8px;height:22px;overflow:hidden"><div class="t" style="left:0;top:3px;font-size:14px;color:#000;letter-spacing:-0.535px">RADIO_02_POP.rpf</div></div>
<svg class="a" style="left:123.6px;top:470.8px;" width="18" height="18" viewBox="0 0 18 18"><defs><linearGradient id="cb600" x1="0" y1="0" x2="0.6" y2="1"><stop offset="0" stop-color="#a4cbfc"/><stop offset="1" stop-color="#4f97f1"/></linearGradient></defs><rect x="5.4" y="0.5" width="11.6" height="14.2" rx="1" fill="#74aef7" stroke="#4a8ff0" stroke-width="0.9"/><rect x="3" y="1.6" width="11.8" height="14.4" rx="1" fill="#7db4f8" stroke="#4a8ff0" stroke-width="0.9"/><rect x="0.5" y="3.2" width="11.6" height="14.2" rx="1.2" fill="url(#cb600)" stroke="#4a90f0" stroke-width="0.9"/></svg>
<div class="a" style="left:148.5px;top:471.449px;width:104.8px;height:22px;overflow:hidden"><div class="t" style="left:0;top:3px;font-size:14px;color:#000;letter-spacing:-0.764px">RADIO_03_HIPHOP_NEW.rpf</div></div>
<svg class="a" style="left:123.6px;top:495.8px;" width="18" height="18" viewBox="0 0 18 18"><defs><linearGradient id="cb625" x1="0" y1="0" x2="0.6" y2="1"><stop offset="0" stop-color="#a4cbfc"/><stop offset="1" stop-color="#4f97f1"/></linearGradient></defs><rect x="5.4" y="0.5" width="11.6" height="14.2" rx="1" fill="#74aef7" stroke="#4a8ff0" stroke-width="0.9"/><rect x="3" y="1.6" width="11.8" height="14.4" rx="1" fill="#7db4f8" stroke="#4a8ff0" stroke-width="0.9"/><rect x="0.5" y="3.2" width="11.6" height="14.2" rx="1.2" fill="url(#cb625)" stroke="#4a90f0" stroke-width="0.9"/></svg>
<div class="a" style="left:148.5px;top:496.449px;width:104.8px;height:22px;overflow:hidden"><div class="t" style="left:0;top:3px;font-size:14px;color:#000;letter-spacing:-1.033px">RADIO_04_PUNK.rpf</div></div>
<svg class="a" style="left:123.6px;top:520.8px;" width="18" height="18" viewBox="0 0 18 18"><defs><linearGradient id="cb650" x1="0" y1="0" x2="0.6" y2="1"><stop offset="0" stop-color="#a4cbfc"/><stop offset="1" stop-color="#4f97f1"/></linearGradient></defs><rect x="5.4" y="0.5" width="11.6" height="14.2" rx="1" fill="#74aef7" stroke="#4a8ff0" stroke-width="0.9"/><rect x="3" y="1.6" width="11.8" height="14.4" rx="1" fill="#7db4f8" stroke="#4a8ff0" stroke-width="0.9"/><rect x="0.5" y="3.2" width="11.6" height="14.2" rx="1.2" fill="url(#cb650)" stroke="#4a90f0" stroke-width="0.9"/></svg>
<div class="a" style="left:148.5px;top:521.449px;width:104.8px;height:22px;overflow:hidden"><div class="t" style="left:0;top:3px;font-size:14px;color:#000;letter-spacing:-0.924px">RADIO_05_TALK_01.rpf</div></div>
<svg class="a" style="left:123.6px;top:545.8px;" width="18" height="18" viewBox="0 0 18 18"><defs><linearGradient id="cb675" x1="0" y1="0" x2="0.6" y2="1"><stop offset="0" stop-color="#a4cbfc"/><stop offset="1" stop-color="#4f97f1"/></linearGradient></defs><rect x="5.4" y="0.5" width="11.6" height="14.2" rx="1" fill="#74aef7" stroke="#4a8ff0" stroke-width="0.9"/><rect x="3" y="1.6" width="11.8" height="14.4" rx="1" fill="#7db4f8" stroke="#4a8ff0" stroke-width="0.9"/><rect x="0.5" y="3.2" width="11.6" height="14.2" rx="1.2" fill="url(#cb675)" stroke="#4a90f0" stroke-width="0.9"/></svg>
<div class="a" style="left:148.5px;top:546.449px;width:104.8px;height:22px;overflow:hidden"><div class="t" style="left:0;top:3px;font-size:14px;color:#000;letter-spacing:-0.993px">RADIO_06_COUNTRY.rpf</div></div>
<svg class="a" style="left:123.6px;top:570.8px;" width="18" height="18" viewBox="0 0 18 18"><defs><linearGradient id="cb700" x1="0" y1="0" x2="0.6" y2="1"><stop offset="0" stop-color="#a4cbfc"/><stop offset="1" stop-color="#4f97f1"/></linearGradient></defs><rect x="5.4" y="0.5" width="11.6" height="14.2" rx="1" fill="#74aef7" stroke="#4a8ff0" stroke-width="0.9"/><rect x="3" y="1.6" width="11.8" height="14.4" rx="1" fill="#7db4f8" stroke="#4a8ff0" stroke-width="0.9"/><rect x="0.5" y="3.2" width="11.6" height="14.2" rx="1.2" fill="url(#cb700)" stroke="#4a90f0" stroke-width="0.9"/></svg>
<div class="a" style="left:148.5px;top:571.449px;width:104.8px;height:22px;overflow:hidden"><div class="t" style="left:0;top:3px;font-size:14px;color:#000;letter-spacing:-0.896px">RADIO_07_DANCE_01.rpf</div></div>
<!-- ivlist -->
<svg class="a" style="left:400px;top:140.5px;" width="12" height="7" viewBox="0 0 12 7"><path d="M1.5 5.5 L6 1.5 L10.5 5.5" fill="none" stroke="#6a6a6a" stroke-width="1"/></svg>
<div class="t" style="left:286.70px;top:149.00px;font-size:13px;color:#1b1b1b;letter-spacing:-0.673px;">Имя</div>
<div class="t" style="left:538.50px;top:149.00px;font-size:13px;color:#1b1b1b;letter-spacing:-0.057px;">Тип</div>
<div class="t" style="left:709.80px;top:149.00px;font-size:13px;color:#1b1b1b;letter-spacing:-0.080px;">Размер</div>
<div class="t" style="left:769.40px;top:149.00px;font-size:13px;color:#1b1b1b;letter-spacing:0.751px;">Атрибуты</div>
<div class="t" style="left:850.20px;top:149.00px;font-size:13px;color:#1b1b1b;letter-spacing:0.431px;">Ключевые слова</div>
<div class="a" style="left:530px;top:140px;width:1px;height:30px;background:#e5e5e5"></div>
<div class="a" style="left:683px;top:140px;width:1px;height:30px;background:#e5e5e5"></div>
<div class="a" style="left:761.5px;top:140px;width:1px;height:30px;background:#e5e5e5"></div>
<div class="a" style="left:842px;top:140px;width:1px;height:30px;background:#e5e5e5"></div>
<div class="a" style="left:968px;top:140px;width:1px;height:30px;background:#e5e5e5"></div>
<div class="t" style="left:295.20px;top:174.48px;font-size:15.5px;color:#1e3c8c;letter-spacing:-0.391px;">Audio Wave Container (10)</div>
<div class="a" style="left:478px;top:182px;width:810px;height:1px;background:#a9c3e8"></div>
<svg class="a" style="left:287.5px;top:197.1px;" width="15.5" height="19.6" viewBox="0 0 15.5 19.6"><path d="M0.6 0.6 H11 L14.6 4.2 V18.9 H0.6 Z" fill="#f6f6f6" stroke="#c2c2c2" stroke-width="1.1"/><path d="M11 0.6 V4.2 H14.6" fill="#fff" stroke="#c8c8c8" stroke-width="0.8"/><path d="M8.3 4 V13.8" stroke="#2a7dd1" stroke-width="1.4"/><path d="M8.3 4 C8.8 6.5 11.8 7 11.2 10.8" fill="none" stroke="#2a7dd1" stroke-width="1.4"/><ellipse cx="6.2" cy="14.2" rx="2.9" ry="2.2" transform="rotate(-20 6.2 14.2)" fill="#2a7dd1"/></svg>
<div class="a" style="left:306.6px;top:197.749px;width:220.9px;height:22px;overflow:hidden"><div class="t" style="left:0;top:3px;font-size:14px;color:#000;letter-spacing:-0.165px">prologue_blast_security_doors.awc</div></div>
<div class="t" style="left:538.50px;top:200.75px;font-size:14px;color:#000;letter-spacing:-0.278px;">Audio Wave Container</div>
<div class="t" style="left:699.08px;top:200.75px;font-size:14px;color:#000;letter-spacing:-0.310px;">1 024 Кб</div>
<div class="t" style="left:769.40px;top:200.75px;font-size:14px;color:#000;letter-spacing:-0.415px;">Нет</div>
<div class="t" style="left:850.20px;top:200.75px;font-size:14px;color:#000;letter-spacing:-0.415px;">Нет</div>
<svg class="a" style="left:287.5px;top:219.6px;" width="15.5" height="19.6" viewBox="0 0 15.5 19.6"><path d="M0.6 0.6 H11 L14.6 4.2 V18.9 H0.6 Z" fill="#f6f6f6" stroke="#c2c2c2" stroke-width="1.1"/><path d="M11 0.6 V4.2 H14.6" fill="#fff" stroke="#c8c8c8" stroke-width="0.8"/><path d="M8.3 4 V13.8" stroke="#2a7dd1" stroke-width="1.4"/><path d="M8.3 4 C8.8 6.5 11.8 7 11.2 10.8" fill="none" stroke="#2a7dd1" stroke-width="1.4"/><ellipse cx="6.2" cy="14.2" rx="2.9" ry="2.2" transform="rotate(-20 6.2 14.2)" fill="#2a7dd1"/></svg>
<div class="a" style="left:306.6px;top:220.249px;width:220.9px;height:22px;overflow:hidden"><div class="t" style="left:0;top:3px;font-size:14px;color:#000;letter-spacing:-0.087px">prologue_blow_the_vault.awc</div></div>
<div class="t" style="left:538.50px;top:223.25px;font-size:14px;color:#000;letter-spacing:-0.278px;">Audio Wave Container</div>
<div class="t" style="left:699.08px;top:223.25px;font-size:14px;color:#000;letter-spacing:-0.310px;">2 048 Кб</div>
<div class="t" style="left:769.40px;top:223.25px;font-size:14px;color:#000;letter-spacing:-0.415px;">Нет</div>
<div class="t" style="left:850.20px;top:223.25px;font-size:14px;color:#000;letter-spacing:-0.415px;">Нет</div>
<svg class="a" style="left:287.5px;top:242.1px;" width="15.5" height="19.6" viewBox="0 0 15.5 19.6"><path d="M0.6 0.6 H11 L14.6 4.2 V18.9 H0.6 Z" fill="#f6f6f6" stroke="#c2c2c2" stroke-width="1.1"/><path d="M11 0.6 V4.2 H14.6" fill="#fff" stroke="#c8c8c8" stroke-width="0.8"/><path d="M8.3 4 V13.8" stroke="#2a7dd1" stroke-width="1.4"/><path d="M8.3 4 C8.8 6.5 11.8 7 11.2 10.8" fill="none" stroke="#2a7dd1" stroke-width="1.4"/><ellipse cx="6.2" cy="14.2" rx="2.9" ry="2.2" transform="rotate(-20 6.2 14.2)" fill="#2a7dd1"/></svg>
<div class="a" style="left:306.6px;top:242.749px;width:220.9px;height:22px;overflow:hidden"><div class="t" style="left:0;top:3px;font-size:14px;color:#000;letter-spacing:-0.157px">prologue_train_suv_crash.awc</div></div>
<div class="t" style="left:538.50px;top:245.75px;font-size:14px;color:#000;letter-spacing:-0.278px;">Audio Wave Container</div>
<div class="t" style="left:699.08px;top:245.75px;font-size:14px;color:#000;letter-spacing:-0.310px;">2 560 Кб</div>
<div class="t" style="left:769.40px;top:245.75px;font-size:14px;color:#000;letter-spacing:-0.415px;">Нет</div>
<div class="t" style="left:850.20px;top:245.75px;font-size:14px;color:#000;letter-spacing:-0.415px;">Нет</div>
<svg class="a" style="left:287.5px;top:264.6px;" width="15.5" height="19.6" viewBox="0 0 15.5 19.6"><path d="M0.6 0.6 H11 L14.6 4.2 V18.9 H0.6 Z" fill="#f6f6f6" stroke="#c2c2c2" stroke-width="1.1"/><path d="M11 0.6 V4.2 H14.6" fill="#fff" stroke="#c8c8c8" stroke-width="0.8"/><path d="M8.3 4 V13.8" stroke="#2a7dd1" stroke-width="1.4"/><path d="M8.3 4 C8.8 6.5 11.8 7 11.2 10.8" fill="none" stroke="#2a7dd1" stroke-width="1.4"/><ellipse cx="6.2" cy="14.2" rx="2.9" ry="2.2" transform="rotate(-20 6.2 14.2)" fill="#2a7dd1"/></svg>
<div class="a" style="left:306.6px;top:265.249px;width:220.9px;height:22px;overflow:hidden"><div class="t" style="left:0;top:3px;font-size:14px;color:#000;letter-spacing:-0.168px">pro_ig_1_sync_mastered_only.awc</div></div>
<div class="t" style="left:538.50px;top:268.25px;font-size:14px;color:#000;letter-spacing:-0.278px;">Audio Wave Container</div>
<div class="t" style="left:699.08px;top:268.25px;font-size:14px;color:#000;letter-spacing:-0.310px;">1 024 Кб</div>
<div class="t" style="left:769.40px;top:268.25px;font-size:14px;color:#000;letter-spacing:-0.415px;">Нет</div>
<div class="t" style="left:850.20px;top:268.25px;font-size:14px;color:#000;letter-spacing:-0.415px;">Нет</div>
<svg class="a" style="left:287.5px;top:287.1px;" width="15.5" height="19.6" viewBox="0 0 15.5 19.6"><path d="M0.6 0.6 H11 L14.6 4.2 V18.9 H0.6 Z" fill="#f6f6f6" stroke="#c2c2c2" stroke-width="1.1"/><path d="M11 0.6 V4.2 H14.6" fill="#fff" stroke="#c8c8c8" stroke-width="0.8"/><path d="M8.3 4 V13.8" stroke="#2a7dd1" stroke-width="1.4"/><path d="M8.3 4 C8.8 6.5 11.8 7 11.2 10.8" fill="none" stroke="#2a7dd1" stroke-width="1.4"/><ellipse cx="6.2" cy="14.2" rx="2.9" ry="2.2" transform="rotate(-20 6.2 14.2)" fill="#2a7dd1"/></svg>
<div class="a" style="left:306.6px;top:287.749px;width:220.9px;height:22px;overflow:hidden"><div class="t" style="left:0;top:3px;font-size:14px;color:#000;letter-spacing:-0.223px">pro_mcs_1_mastered_only.awc</div></div>
<div class="t" style="left:538.50px;top:290.75px;font-size:14px;color:#000;letter-spacing:-0.278px;">Audio Wave Container</div>
<div class="t" style="left:710.23px;top:290.75px;font-size:14px;color:#000;letter-spacing:-0.326px;">512 Кб</div>
<div class="t" style="left:769.40px;top:290.75px;font-size:14px;color:#000;letter-spacing:-0.415px;">Нет</div>
<div class="t" style="left:850.20px;top:290.75px;font-size:14px;color:#000;letter-spacing:-0.415px;">Нет</div>
<svg class="a" style="left:287.5px;top:309.6px;" width="15.5" height="19.6" viewBox="0 0 15.5 19.6"><path d="M0.6 0.6 H11 L14.6 4.2 V18.9 H0.6 Z" fill="#f6f6f6" stroke="#c2c2c2" stroke-width="1.1"/><path d="M11 0.6 V4.2 H14.6" fill="#fff" stroke="#c8c8c8" stroke-width="0.8"/><path d="M8.3 4 V13.8" stroke="#2a7dd1" stroke-width="1.4"/><path d="M8.3 4 C8.8 6.5 11.8 7 11.2 10.8" fill="none" stroke="#2a7dd1" stroke-width="1.4"/><ellipse cx="6.2" cy="14.2" rx="2.9" ry="2.2" transform="rotate(-20 6.2 14.2)" fill="#2a7dd1"/></svg>
<div class="a" style="left:306.6px;top:310.249px;width:220.9px;height:22px;overflow:hidden"><div class="t" style="left:0;top:3px;font-size:14px;color:#000;letter-spacing:-0.223px">pro_mcs_2_mastered_only.awc</div></div>
<div class="t" style="left:538.50px;top:313.25px;font-size:14px;color:#000;letter-spacing:-0.278px;">Audio Wave Container</div>
<div class="t" style="left:699.08px;top:313.25px;font-size:14px;color:#000;letter-spacing:-0.310px;">2 048 Кб</div>
<div class="t" style="left:769.40px;top:313.25px;font-size:14px;color:#000;letter-spacing:-0.415px;">Нет</div>
<div class="t" style="left:850.20px;top:313.25px;font-size:14px;color:#000;letter-spacing:-0.415px;">Нет</div>
<svg class="a" style="left:287.5px;top:332.1px;" width="15.5" height="19.6" viewBox="0 0 15.5 19.6"><path d="M0.6 0.6 H11 L14.6 4.2 V18.9 H0.6 Z" fill="#f6f6f6" stroke="#c2c2c2" stroke-width="1.1"/><path d="M11 0.6 V4.2 H14.6" fill="#fff" stroke="#c8c8c8" stroke-width="0.8"/><path d="M8.3 4 V13.8" stroke="#2a7dd1" stroke-width="1.4"/><path d="M8.3 4 C8.8 6.5 11.8 7 11.2 10.8" fill="none" stroke="#2a7dd1" stroke-width="1.4"/><ellipse cx="6.2" cy="14.2" rx="2.9" ry="2.2" transform="rotate(-20 6.2 14.2)" fill="#2a7dd1"/></svg>
<div class="a" style="left:306.6px;top:332.749px;width:220.9px;height:22px;overflow:hidden"><div class="t" style="left:0;top:3px;font-size:14px;color:#000;letter-spacing:-0.179px">pro_mcs_3_pt1_mastered_only.awc</div></div>
<div class="t" style="left:538.50px;top:335.75px;font-size:14px;color:#000;letter-spacing:-0.278px;">Audio Wave Container</div>
<div class="t" style="left:699.08px;top:335.75px;font-size:14px;color:#000;letter-spacing:-0.310px;">2 048 Кб</div>
<div class="t" style="left:769.40px;top:335.75px;font-size:14px;color:#000;letter-spacing:-0.415px;">Нет</div>
<div class="t" style="left:850.20px;top:335.75px;font-size:14px;color:#000;letter-spacing:-0.415px;">Нет</div>
<svg class="a" style="left:287.5px;top:354.6px;" width="15.5" height="19.6" viewBox="0 0 15.5 19.6"><path d="M0.6 0.6 H11 L14.6 4.2 V18.9 H0.6 Z" fill="#f6f6f6" stroke="#c2c2c2" stroke-width="1.1"/><path d="M11 0.6 V4.2 H14.6" fill="#fff" stroke="#c8c8c8" stroke-width="0.8"/><path d="M8.3 4 V13.8" stroke="#2a7dd1" stroke-width="1.4"/><path d="M8.3 4 C8.8 6.5 11.8 7 11.2 10.8" fill="none" stroke="#2a7dd1" stroke-width="1.4"/><ellipse cx="6.2" cy="14.2" rx="2.9" ry="2.2" transform="rotate(-20 6.2 14.2)" fill="#2a7dd1"/></svg>
<div class="a" style="left:306.6px;top:355.249px;width:220.9px;height:22px;overflow:hidden"><div class="t" style="left:0;top:3px;font-size:14px;color:#000;letter-spacing:-0.177px">pro_mcs_5_seq_mastered_only.awc</div></div>
<div class="t" style="left:538.50px;top:358.25px;font-size:14px;color:#000;letter-spacing:-0.278px;">Audio Wave Container</div>
<div class="t" style="left:699.08px;top:358.25px;font-size:14px;color:#000;letter-spacing:-0.310px;">6 656 Кб</div>
<div class="t" style="left:769.40px;top:358.25px;font-size:14px;color:#000;letter-spacing:-0.415px;">Нет</div>
<div class="t" style="left:850.20px;top:358.25px;font-size:14px;color:#000;letter-spacing:-0.415px;">Нет</div>
<svg class="a" style="left:287.5px;top:377.1px;" width="15.5" height="19.6" viewBox="0 0 15.5 19.6"><path d="M0.6 0.6 H11 L14.6 4.2 V18.9 H0.6 Z" fill="#f6f6f6" stroke="#c2c2c2" stroke-width="1.1"/><path d="M11 0.6 V4.2 H14.6" fill="#fff" stroke="#c8c8c8" stroke-width="0.8"/><path d="M8.3 4 V13.8" stroke="#2a7dd1" stroke-width="1.4"/><path d="M8.3 4 C8.8 6.5 11.8 7 11.2 10.8" fill="none" stroke="#2a7dd1" stroke-width="1.4"/><ellipse cx="6.2" cy="14.2" rx="2.9" ry="2.2" transform="rotate(-20 6.2 14.2)" fill="#2a7dd1"/></svg>
<div class="a" style="left:306.6px;top:377.749px;width:220.9px;height:22px;overflow:hidden"><div class="t" style="left:0;top:3px;font-size:14px;color:#000;letter-spacing:-0.177px">pro_mcs_6_seq_mastered_only.awc</div></div>
<div class="t" style="left:538.50px;top:380.75px;font-size:14px;color:#000;letter-spacing:-0.278px;">Audio Wave Container</div>
<div class="t" style="left:699.08px;top:380.75px;font-size:14px;color:#000;letter-spacing:-0.310px;">8 192 Кб</div>
<div class="t" style="left:769.40px;top:380.75px;font-size:14px;color:#000;letter-spacing:-0.415px;">Нет</div>
<div class="t" style="left:850.20px;top:380.75px;font-size:14px;color:#000;letter-spacing:-0.415px;">Нет</div>
<svg class="a" style="left:287.5px;top:399.6px;" width="15.5" height="19.6" viewBox="0 0 15.5 19.6"><path d="M0.6 0.6 H11 L14.6 4.2 V18.9 H0.6 Z" fill="#f6f6f6" stroke="#c2c2c2" stroke-width="1.1"/><path d="M11 0.6 V4.2 H14.6" fill="#fff" stroke="#c8c8c8" stroke-width="0.8"/><path d="M8.3 4 V13.8" stroke="#2a7dd1" stroke-width="1.4"/><path d="M8.3 4 C8.8 6.5 11.8 7 11.2 10.8" fill="none" stroke="#2a7dd1" stroke-width="1.4"/><ellipse cx="6.2" cy="14.2" rx="2.9" ry="2.2" transform="rotate(-20 6.2 14.2)" fill="#2a7dd1"/></svg>
<div class="a" style="left:306.6px;top:400.249px;width:220.9px;height:22px;overflow:hidden"><div class="t" style="left:0;top:3px;font-size:14px;color:#000;letter-spacing:-0.292px">td_loading_music.awc</div></div>
<div class="t" style="left:538.50px;top:403.25px;font-size:14px;color:#000;letter-spacing:-0.278px;">Audio Wave Container</div>
<div class="t" style="left:691.65px;top:403.25px;font-size:14px;color:#000;letter-spacing:-0.314px;">19 612 Кб</div>
<div class="t" style="left:769.40px;top:403.25px;font-size:14px;color:#000;letter-spacing:-0.415px;">Нет</div>
<div class="t" style="left:850.20px;top:403.25px;font-size:14px;color:#000;letter-spacing:-0.415px;">Нет</div>
<svg class="a" style="left:467.5px;top:580px;" width="5" height="6" viewBox="0 0 5 6"><path d="M0.5 0.5 V5 M0.5 0.5 L4 4" stroke="#333" stroke-width="0.9" fill="none"/></svg>
<!-- watermark -->
<div class="t" style="left:834.6px;top:476.206px;font-size:73px;font-weight:700;letter-spacing:0.673px;padding-bottom:24px;padding-right:10px;background:linear-gradient(90deg,#d0d6fb 0%,#dcdafb 60%,#ebe1fa 72%,#e8e2fb 100%);-webkit-background-clip:text;background-clip:text;color:transparent;">ragemp.pro</div>
</div>

<div class="a" style="left:155.5px;top:296.4px;width:197.8px;height:39px;border:4.1px solid #fe0000;border-radius:3px;box-sizing:border-box"></div>
<div class="a" style="left:1443.8px;top:147.3px;width:185.4px;height:60.3px;border:3.7px solid #fe0000;border-radius:3.5px;box-sizing:border-box"></div>
<svg class="a" style="left:0;top:0" width="1786" height="705" viewBox="0 0 1786 705"><path d="M360 330.2 L866 590.5" stroke="#fe0000" stroke-width="3.9" stroke-linecap="round" fill="none"/><path d="M881.3 599.5 L861 596.2 L866.7 585.4 Z" fill="#fe0000"/></svg>

</body></html>
